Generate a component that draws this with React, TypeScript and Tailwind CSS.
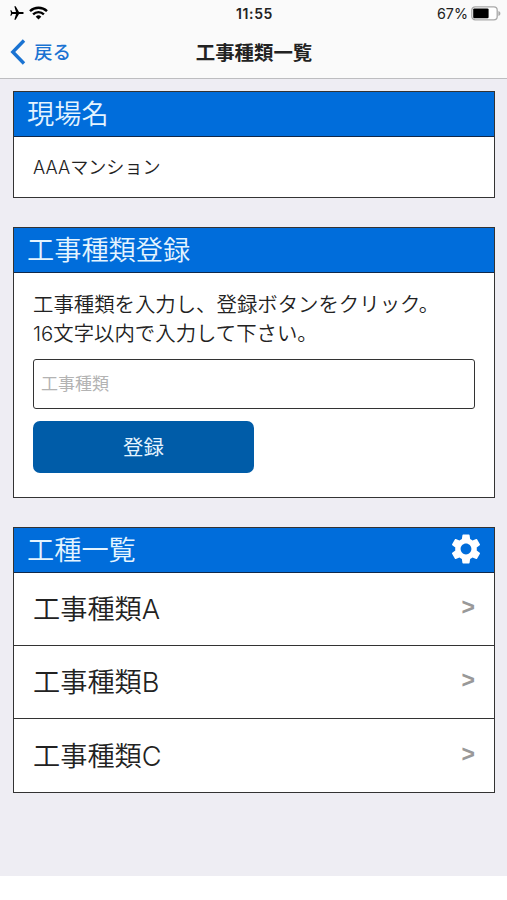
import type { ReactNode } from "react";
import { MdAirplanemodeActive, MdSettings } from "react-icons/md";

const workTypes = ["工事種類A", "工事種類B", "工事種類C"];

function WifiIcon() {
    return (
        <svg width="19" height="14" viewBox="0 0 19 14" fill="none" stroke="#000" strokeWidth="2.4">
            <path d="M1 5.1a12.4 12.4 0 0 1 17 0" />
            <path d="M4.1 8.3a7.8 7.8 0 0 1 10.8 0" />
            <path d="M9.5 13.4 6.7 10.7a4 4 0 0 1 5.6 0z" fill="#000" stroke="none" />
        </svg>
    );
}

function BatteryIcon() {
    return (
        <svg width="30" height="15" viewBox="0 0 30 15">
            <rect x="0.8" y="0.8" width="25.4" height="13" rx="3.4" fill="#fff" stroke="#a9a9a9" strokeWidth="1.3" />
            <rect x="2.2" y="2.4" width="15.4" height="9.8" rx="1.2" fill="#000" />
            <path d="M27.4 4.9c1.4.6 2 1.4 2 2.5s-.6 1.9-2 2.5z" fill="#a9a9a9" />
        </svg>
    );
}

function StatusBar() {
    return (
        <div className="grid h-[27px] grid-cols-3 items-center pl-[9px] pr-[6px] text-black">
            <div className="flex items-center gap-[4px] pb-px">
                <MdAirplanemodeActive className="size-[16px] rotate-90" />
                <WifiIcon />
            </div>
            <span className="pr-px text-center text-[14px] font-semibold tracking-[0.6px] text-[#222]">11:55</span>
            <div className="flex items-center justify-end gap-[3px]">
                <span className="text-[14.3px] text-[#222]">67%</span>
                <BatteryIcon />
            </div>
        </div>
    );
}

function Card({ title, action, children }: { title: string; action?: ReactNode; children: ReactNode }) {
    return (
        <section className="border border-[#333] bg-white">
            <h2 className="flex h-[45px] items-center justify-between border-b border-[#10284a] bg-[#006ddb] pl-[13px] pr-[10px] text-[27.2px] font-[350] text-[#e4f4ff]">
                <span className="pt-[3px]">{title}</span>
                {action}
            </h2>
            {children}
        </section>
    );
}

export default function App() {
    return (
        <div className="flex h-[900px] w-[507px] flex-col overflow-hidden bg-white font-['Inter','Noto_Sans_CJK_JP',sans-serif] text-[#222]">
            <header className="h-[79px] shrink-0 border-b border-[#bdbdc0] bg-[#fafafa]">
                <StatusBar />
                <div className="grid h-[50px] grid-cols-3 items-center pl-[10px] pr-[8px]">
                    <button className="flex items-center gap-[8px] text-[18.5px] font-medium text-[#1a73d2]">
                        <svg width="16" height="26" viewBox="0 0 16 26" fill="none" stroke="currentColor" strokeWidth="3.4">
                            <path d="M14 1.5 2.8 13 14 24.5" />
                        </svg>
                        <span className="pt-px">戻る</span>
                    </button>
                    <h1 className="whitespace-nowrap pr-px pt-[3px] text-center text-[19.4px] font-bold">工事種類一覧</h1>
                </div>
            </header>

            <main className="flex h-[797px] shrink-0 flex-col gap-[29px] bg-[#eeedf3] pl-[13px] pr-[12px] pt-[12px]">
                <Card title="現場名">
                    <p className="flex h-[60px] items-center pl-[19px] pt-[2px] text-[18.1px] font-[350]">AAAマンション</p>
                </Card>

                <Card title="工事種類登録">
                    <div className="h-[224px] px-[19px] pt-[18px]">
                        <p className="whitespace-nowrap text-[20.4px] font-[350] leading-[28.5px]">
                            工事種類を入力し、登録ボタンをクリック。
                            <br />
                            16文字以内で入力して下さい。
                        </p>
                        <input
                            placeholder="工事種類"
                            className="mt-[11px] block h-[50px] w-full rounded-[3px] border border-[#333] px-[7px] text-[17px] placeholder:text-[#b3b3b3]"
                        />
                        <button className="mt-[12px] h-[52px] w-[221px] rounded-[7px] bg-[#005ca8] pt-[2px] text-[20.4px] text-[#e4f4ff]">
                            登録
                        </button>
                    </div>
                </Card>

                <Card title="工種一覧" action={<MdSettings className="mb-[2px] size-[36px] text-white" />}>
                    <ul className="divide-y divide-[#333]">
                        {workTypes.map((name) => (
                            <li key={name} className="flex h-[73px] items-center justify-between pl-[19px] pr-[19px]">
                                <span className="pt-[3px] text-[27.2px] font-[350]">{name}</span>
                                <span className="pb-[3px] font-['Liberation_Sans',sans-serif] text-[23px] font-bold text-[#999]">&gt;</span>
                            </li>
                        ))}
                    </ul>
                </Card>
            </main>
        </div>
    );
}
